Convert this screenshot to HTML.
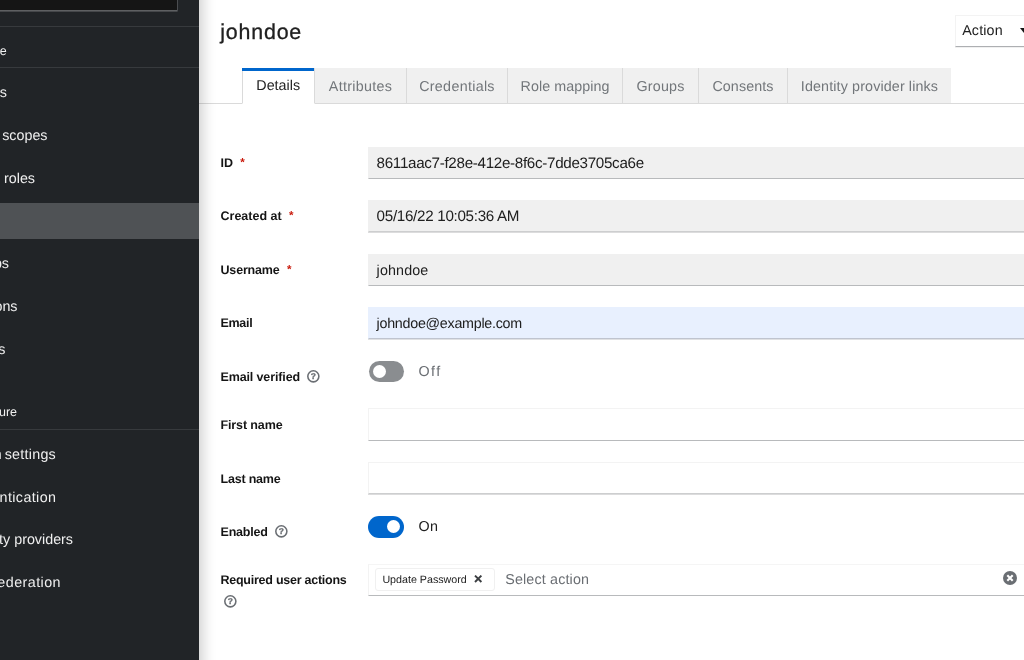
<!DOCTYPE html>
<html lang="en">
<head>
<meta charset="utf-8">
<title>johndoe - Keycloak Administration Console</title>
<style>
html,body{margin:0;padding:0;}
body{-webkit-font-smoothing:antialiased;text-rendering:geometricPrecision;width:1024px;height:660px;overflow:hidden;background:#fff;position:relative;font-family:"Liberation Sans",sans-serif;color:#202020;font-size:14.3px;}
#wrap{position:absolute;left:0;top:0;width:1024px;height:660px;overflow:hidden;will-change:transform;}
.abs{position:absolute;white-space:nowrap;}
#side{position:absolute;left:0;top:0;width:199px;height:660px;background:#212427;overflow:hidden;z-index:5;}
#sideshadow{position:absolute;left:0;top:-60px;width:199px;height:780px;background:#212427;box-shadow:11px 0 12.5px -7px rgba(3,3,3,.19);z-index:4;}
#realm{position:absolute;left:-40px;top:-23px;width:216px;height:32px;background:#151515;border:1px solid #4b4d50;border-bottom-color:#5e6062;box-shadow:0 1px 0 #45474a;border-radius:0 0 1.5px 0;box-sizing:content-box;}
.hr{position:absolute;left:0;width:199px;height:1px;background:#373a3d;}
.nav{position:absolute;white-space:nowrap;color:#f0f0f0;font-size:14.3px;line-height:20px;text-align:right;left:-200px;}
.nav.sec{font-size:12.5px;}
#cur{position:absolute;left:0;top:203px;width:199px;height:36px;background:#4f5255;}
#main{position:absolute;left:199px;top:0;width:825px;height:660px;background:#fff;}
h1{-webkit-text-stroke:.3px #202020;position:absolute;margin:0;left:220.3px;top:18px;font-size:21.4px;line-height:28px;font-weight:400;letter-spacing:.8px;white-space:nowrap;}
#action{position:absolute;left:955px;top:15px;width:80px;height:30px;border:1px solid #f3f3f3;border-bottom:1px solid #adafb2;box-shadow:0 1px 0 #f0f0f0;box-sizing:content-box;background:#fff;}
#action span{position:absolute;left:6.2px;top:5px;font-size:14.3px;line-height:20px;letter-spacing:.15px;}
#action i{position:absolute;left:63.8px;top:12px;width:0;height:0;border-left:4.6px solid transparent;border-right:4.6px solid transparent;border-top:5.4px solid #151515;}
#tabline{position:absolute;left:199px;top:103px;width:825px;height:1px;background:#dadada;}
.tab{position:absolute;top:68px;height:36px;background:#f0f0f0;color:#72767a;font-size:14.3px;line-height:38px;letter-spacing:.3px;text-align:center;border-right:1px solid #dadada;border-bottom:1px solid #dadada;box-sizing:border-box;white-space:nowrap;}
.tab.act{background:#fff;color:#222;border-left:1px solid #dadada;border-bottom:1px solid #fff;line-height:37px;letter-spacing:0;text-indent:-.6px;}
.tab.act::before{content:"";position:absolute;left:-1px;right:0;top:0;height:3px;background:#06c;}
.lbl{color:#151515;position:absolute;left:220.5px;font-weight:700;font-size:12.5px;line-height:16px;white-space:nowrap;}
.lbl b{color:#c9190b;font-weight:700;margin-left:7.3px;font-size:11.5px;position:relative;top:-.9px;letter-spacing:0}
.inp{position:absolute;left:368px;width:660px;height:32px;box-sizing:border-box;border:1px solid #f3f3f3;border-bottom:1px solid #b8babc;background:#fff;font-size:14.3px;line-height:31.8px;text-indent:7.6px;white-space:nowrap;letter-spacing:.13px;}
.inp.b2{border-bottom-color:#cdcecf;box-shadow:0 1px 0 #dcdcdd;}
.inp.ro{background:#f0f0f0;border-top-color:#f0f0f0;border-left-color:#f0f0f0;}
.inp.af{background:#e8f0fe;border-color:#e8f0fe;border-bottom-color:#bfc4cf;box-shadow:0 1px 0 #e0e1e3;}
.sw{position:absolute;left:368.6px;width:35.6px;height:21.3px;border-radius:11px;background:#8a8d90;}
.sw i{position:absolute;top:4.2px;left:4.3px;width:13.2px;height:13.2px;border-radius:50%;background:#fff;}
.sw.on{background:#06c;}
.sw.on i{left:18.9px;top:4.3px;}
.swt{position:absolute;left:418.5px;font-size:14.3px;line-height:20px;}
.help{position:absolute;width:12.7px;height:12.7px;}
</style>
</head>
<body>
<div id="wrap">
<div id="main"></div>
<div id="sideshadow"></div>
<div id="side">
  <div id="realm"></div>
  <div class="hr" style="top:26px"></div>
  <div class="nav sec" style="top:41px;width:206.8px">Manage</div>
  <div class="hr" style="top:67px"></div>
  <div class="nav" style="top:83px;width:206.8px">Clients</div>
  <div class="nav" style="top:126px;width:247.5px">Client scopes</div>
  <div class="nav" style="top:169px;width:235px;word-spacing:-1px">Realm roles</div>
  <div id="cur"></div>
  <div class="nav" style="top:212px;width:200px">Users</div>
  <div class="nav" style="top:254px;width:209px">Groups</div>
  <div class="nav" style="top:297px;width:217.5px">Sessions</div>
  <div class="nav" style="top:340px;width:205.5px">Events</div>
  <div class="nav sec" style="top:402px;width:217px">Configure</div>
  <div class="hr" style="top:429px"></div>
  <div class="nav" style="top:445px;width:256px;letter-spacing:.25px;word-spacing:-1.3px">Realm settings</div>
  <div class="nav" style="top:488px;width:256.4px;letter-spacing:.4px">Authentication</div>
  <div class="nav" style="top:530px;width:273px">Identity providers</div>
  <div class="nav" style="top:573px;width:261px;letter-spacing:.45px">User federation</div>
</div>

<h1>johndoe</h1>
<div id="action"><span>Action</span><i></i></div>

<div id="tabline"></div>
<div class="tab act" style="left:242px;width:73px">Details</div>
<div class="tab" style="left:315px;width:92px">Attributes</div>
<div class="tab" style="left:407px;width:101px">Credentials</div>
<div class="tab" style="left:508px;width:115px;letter-spacing:.05px">Role mapping</div>
<div class="tab" style="left:623px;width:76px;letter-spacing:.2px">Groups</div>
<div class="tab" style="left:699px;width:89px;letter-spacing:.1px">Consents</div>
<div class="tab" style="left:788px;width:163px;border-right:0;letter-spacing:.13px">Identity provider links</div>

<div class="lbl" style="top:154.6px">ID<b>*</b></div>
<div class="inp ro" style="top:147px;font-size:15.2px;letter-spacing:-.31px;line-height:32.4px">8611aac7-f28e-412e-8f6c-7dde3705ca6e</div>
<div class="lbl" style="top:208.3px">Created at<b>*</b></div>
<div class="inp ro b2" style="top:200px;font-size:15.2px;letter-spacing:-.3px;line-height:32.4px">05/16/22 10:05:36 AM</div>
<div class="lbl" style="top:261.8px;letter-spacing:-.17px">Username<b>*</b></div>
<div class="inp ro" style="top:254px;line-height:33.6px">johndoe</div>
<div class="lbl" style="top:315.3px;letter-spacing:-.3px">Email</div>
<div class="inp af" style="top:307px;letter-spacing:-.27px;line-height:33.2px">johndoe@example.com</div>

<div class="lbl" style="top:368.5px;letter-spacing:-.13px">Email verified</div>
<svg class="help" style="left:307.15px;top:369.95px" viewBox="0 0 12.7 12.7"><circle cx="6.35" cy="6.35" r="5.55" fill="none" stroke="#6a6e73" stroke-width="1.55"/><text x="6.35" y="9.35" font-size="8.4" font-weight="700" text-anchor="middle" font-family="Liberation Sans, sans-serif" fill="#6a6e73" stroke="#6a6e73" stroke-width=".35">?</text></svg>
<div class="sw" style="top:361px"><i></i></div>
<div class="swt" style="top:361.8px;color:#6a6e73;letter-spacing:1.4px">Off</div>

<div class="lbl" style="top:416.8px;letter-spacing:-.12px">First name</div>
<div class="inp" style="top:408px;height:33px"></div>
<div class="lbl" style="top:470.9px;letter-spacing:-.2px">Last name</div>
<div class="inp b2" style="top:462px"></div>

<div class="lbl" style="top:523.8px;letter-spacing:-.2px">Enabled</div>
<svg class="help" style="left:274.9px;top:525.15px" viewBox="0 0 12.7 12.7"><circle cx="6.35" cy="6.35" r="5.55" fill="none" stroke="#6a6e73" stroke-width="1.55"/><text x="6.35" y="9.35" font-size="8.4" font-weight="700" text-anchor="middle" font-family="Liberation Sans, sans-serif" fill="#6a6e73" stroke="#6a6e73" stroke-width=".35">?</text></svg>
<div class="sw on" style="top:516px;left:368.35px;width:35.8px;height:21.7px"><i></i></div>
<div class="swt" style="top:517px;letter-spacing:.3px">On</div>

<div class="lbl" style="top:571.9px;letter-spacing:-.25px">Required user actions</div>
<svg class="help" style="left:224.1px;top:595.05px" viewBox="0 0 12.7 12.7"><circle cx="6.35" cy="6.35" r="5.55" fill="none" stroke="#6a6e73" stroke-width="1.55"/><text x="6.35" y="9.35" font-size="8.4" font-weight="700" text-anchor="middle" font-family="Liberation Sans, sans-serif" fill="#6a6e73" stroke="#6a6e73" stroke-width=".35">?</text></svg>
<div class="inp" style="top:564px;height:32px;border-top-color:#f5f5f5"></div>
<div class="abs" style="left:375.3px;top:567.6px;width:117.5px;height:21.4px;border:1px solid #f0f0f0;border-radius:3px;box-sizing:content-box;background:#fff"></div>
<div class="abs" style="left:382.4px;top:573px;font-size:10.7px;line-height:14px">Update Password</div>
<svg class="abs" style="left:474.3px;top:575.2px;width:8.4px;height:7.6px" viewBox="0 0 8.4 7.6"><path d="M1 0.6 L7.4 7 M7.4 0.6 L1 7" stroke="#3c3f42" stroke-width="1.9" fill="none"/></svg>
<div class="abs" style="left:505.2px;top:569.5px;font-size:14.3px;line-height:20px;color:#6a6e73;letter-spacing:.16px">Select action</div>
<svg class="abs" style="left:1002.9px;top:571.05px;width:14px;height:14px" viewBox="0 0 14 14"><circle cx="7" cy="7" r="7" fill="#6a6e73"/><path d="M4.3 4.3 L9.7 9.7 M9.7 4.3 L4.3 9.7" stroke="#fff" stroke-width="2.1" fill="none"/></svg>
</div>
</body>
</html>
